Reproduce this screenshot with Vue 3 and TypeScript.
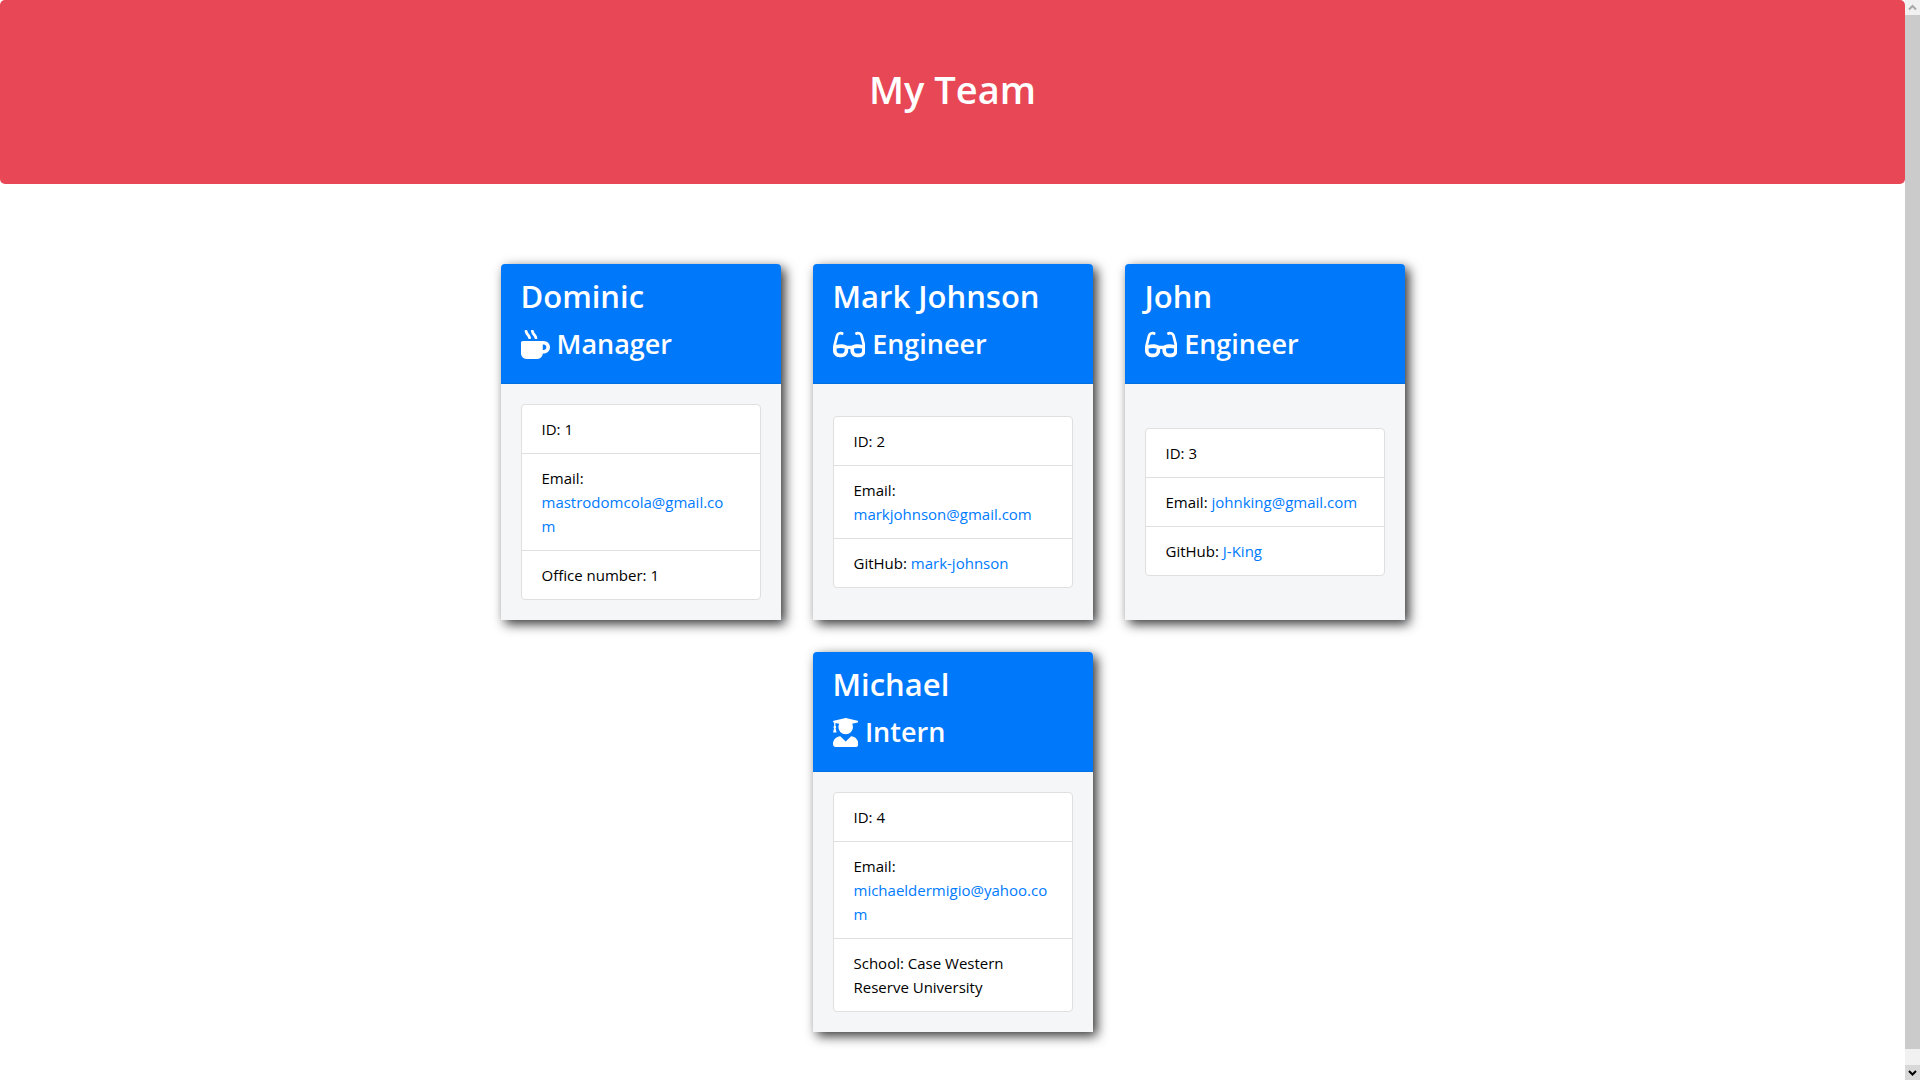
<script setup lang="ts">
interface Detail {
  label: string
  value: string
  href?: string
}

interface Member {
  name: string
  role: string
  icon: 'mug' | 'glasses' | 'graduate'
  details: Detail[]
}

const icons: Record<Member['icon'], { width: number; path: string }> = {
  mug: {
    width: 512,
    path: 'M127.1 146.5c1.3 7.7 8 13.5 16 13.5h16.5c9.8 0 17.6-8.5 16.3-18-3.8-28.2-16.4-54.2-36.6-74.7-14.4-14.7-23.6-33.3-26.4-53.5C111.8 5.9 105 0 96.8 0H80.4C70.6 0 63 8.5 64.1 18c3.9 31.9 18 61.3 40.6 84.4 12 12.2 19.7 27.5 22.4 44.1zm112 0c1.3 7.7 8 13.5 16 13.5h16.5c9.8 0 17.6-8.5 16.3-18-3.8-28.2-16.4-54.2-36.6-74.7-14.4-14.7-23.6-33.3-26.4-53.5C223.8 5.9 217 0 208.8 0h-16.4c-9.8 0-17.5 8.5-16.3 18 3.9 31.9 18 61.3 40.6 84.4 12 12.2 19.7 27.5 22.4 44.1zM400 192H32c-17.7 0-32 14.3-32 32v192c0 53 43 96 96 96h192c53 0 96-43 96-96h16c61.8 0 112-50.2 112-112s-50.2-112-112-112zm0 160h-16v-96h16c26.5 0 48 21.5 48 48s-21.5 48-48 48z',
  },
  glasses: {
    width: 576,
    path: 'M574.1 280.37L528.75 98.66c-5.91-23.7-21.59-44.05-43-55.81-21.44-11.73-46.97-14.11-70.19-6.33l-15.25 5.08c-8.39 2.79-12.92 11.86-10.12 20.24l5.06 15.18c2.79 8.38 11.85 12.91 20.23 10.12l13.18-4.39c10.87-3.62 23-3.57 33.16 1.73 10.29 5.37 17.57 14.56 20.37 25.82l38.46 153.82c-22.19-6.81-49.79-12.46-81.2-12.46-34.77 0-73.98 7.02-114.85 26.74h-73.18c-40.87-19.74-80.08-26.75-114.86-26.75-31.42 0-59.02 5.65-81.21 12.46l38.46-153.83c2.79-11.25 10.09-20.45 20.38-25.81 10.16-5.3 22.28-5.35 33.15-1.73l13.17 4.39c8.38 2.79 17.44-1.74 20.23-10.12l5.06-15.18c2.8-8.38-1.73-17.45-10.12-20.24l-15.25-5.08c-23.22-7.78-48.75-5.41-70.19 6.33-21.41 11.77-37.09 32.11-43 55.81L1.9 280.37A64.218 64.218 0 0 0 0 295.86v70.25C0 429.01 51.58 480 115.2 480h37.12c60.28 0 110.37-45.94 114.88-105.37l2.93-38.63h35.75l2.93 38.63C313.31 434.06 363.4 480 423.68 480h37.12c63.62 0 115.2-50.99 115.2-113.88v-70.25c0-5.23-.64-10.43-1.9-15.5zm-370.72 89.42c-1.97 25.91-24.4 46.21-51.06 46.21H115.2C86.97 416 64 393.62 64 366.11v-37.54c18.12-6.49 43.42-12.92 72.58-12.92 23.86 0 47.26 4.33 69.93 12.92l-3.13 41.22zM512 366.12c0 27.51-22.97 49.88-51.2 49.88h-37.12c-26.67 0-49.1-20.3-51.06-46.21l-3.13-41.22c22.67-8.59 46.08-12.92 69.95-12.92 29.12 0 54.43 6.44 72.55 12.93v37.54z',
  },
  graduate: {
    width: 448,
    path: 'M319.4 320.6L224 416l-95.4-95.4C57.1 323.7 0 382.2 0 454.4v9.6c0 26.5 21.5 48 48 48h352c26.5 0 48-21.5 48-48v-9.6c0-72.2-57.1-130.7-128.6-133.8zM13.6 79.8l6.4 1.5v58.4c-7 4.2-12 11.5-12 20.3 0 8.4 4.6 15.4 11.1 19.7L3.5 242c-1.7 6.9 2.1 14 7.6 14h41.8c5.5 0 9.3-7.1 7.6-14l-15.6-62.3C51.4 175.4 56 168.4 56 160c0-8.8-5-16.1-12-20.3V87.1l66 15.9c-8.6 17.2-14 36.4-14 57 0 70.7 57.3 128 128 128s128-57.3 128-128c0-20.6-5.3-39.8-14-57l96.3-23.2c18.2-4.4 18.2-27.1 0-31.5l-190.4-46c-13-3.1-26.7-3.1-39.7 0L13.6 48.2c-18.1 4.4-18.1 27.2 0 31.6z',
  },
}

const email = (address: string): Detail => ({ label: 'Email', value: address, href: `mailto:${address}` })
const github = (user: string): Detail => ({ label: 'GitHub', value: user, href: `https://github.com/${user}` })

const team: Member[] = [
  {
    name: 'Dominic',
    role: 'Manager',
    icon: 'mug',
    details: [{ label: 'ID', value: '1' }, email('mastrodomcola@gmail.com'), { label: 'Office number', value: '1' }],
  },
  {
    name: 'Mark Johnson',
    role: 'Engineer',
    icon: 'glasses',
    details: [{ label: 'ID', value: '2' }, email('markjohnson@gmail.com'), github('mark-johnson')],
  },
  {
    name: 'John',
    role: 'Engineer',
    icon: 'glasses',
    details: [{ label: 'ID', value: '3' }, email('johnking@gmail.com'), github('J-King')],
  },
  {
    name: 'Michael',
    role: 'Intern',
    icon: 'graduate',
    details: [
      { label: 'ID', value: '4' },
      email('michaeldermigio@yahoo.com'),
      { label: 'School', value: 'Case Western Reserve University' },
    ],
  },
]
</script>

<template>
  <div class="page">
    <div class="content">
      <header class="banner">
        <h1>My Team</h1>
      </header>
      <main class="team">
        <article v-for="member in team" :key="member.name" class="card">
          <div class="card-header">
            <h2>{{ member.name }}</h2>
            <h3>
              <svg class="icon" :viewBox="`0 0 ${icons[member.icon].width} 512`" aria-hidden="true">
                <path :d="icons[member.icon].path" fill="currentColor" />
              </svg>
              <span>{{ member.role }}</span>
            </h3>
          </div>
          <div class="card-body">
            <ul class="details">
              <li v-for="detail in member.details" :key="detail.label">
                <template v-if="detail.href">{{ detail.label }}: <a :href="detail.href">{{ detail.value }}</a></template>
                <template v-else>{{ `${detail.label}: ${detail.value}` }}</template>
              </li>
            </ul>
          </div>
        </article>
      </main>
    </div>
    <div class="scrollbar" aria-hidden="true">
      <div class="arrow arrow-up">
        <svg viewBox="0 0 15 15"><path d="M4 9.500L7.500 6L11 9.500" /></svg>
      </div>
      <div class="track"><div class="thumb"></div></div>
      <div class="arrow arrow-down">
        <svg viewBox="0 0 15 15"><path d="M4 6L7.500 9.500L11 6" /></svg>
      </div>
    </div>
  </div>
</template>

<style>
body {
  margin: 0;
  background: #fff;
}
</style>

<style scoped>
*,
*::before,
*::after {
  box-sizing: border-box;
}

.page {
  display: flex;
  align-items: flex-start;
  color: #000;
  font-family: 'Open Sans', 'Noto Sans', sans-serif;
  font-size: 15px;
  line-height: 24px;
}

.content {
  flex: 1;
  min-width: 0;
}

.banner {
  padding: 64px 32px;
  border-radius: 5px;
  background: #e84756;
  color: #fff;
  text-align: center;
}

h1,
h2,
h3 {
  margin: 0 0 8px;
  font-weight: 600;
}

h1 {
  margin-bottom: 6px;
  font-size: 38px;
  line-height: 50px;
}

h2 {
  font-size: 31px;
  line-height: 40px;
}

h3 {
  display: flex;
  align-items: center;
  gap: 7px;
  font-size: 27px;
  line-height: 40px;
}

.icon {
  height: 29px;
}

.team {
  display: flex;
  flex-wrap: wrap;
  justify-content: center;
  gap: 32px;
  max-width: 1140px;
  margin: 80px auto 48px;
}

.card {
  display: flex;
  flex-direction: column;
  width: 280px;
  border-radius: 4px 4px 0 0;
  background: #f5f6f8;
  box-shadow: 4px 4px 12px rgba(0, 0, 0, 0.8);
}

.card-header {
  padding: 12px 20px 11px;
  border-bottom: 1px solid #006fe0;
  border-radius: 4px 4px 0 0;
  background: #0078fa;
  color: #fff;
}

.card-body {
  display: flex;
  flex: 1;
  flex-direction: column;
  justify-content: center;
  padding: 20px;
}

.details {
  margin: 0;
  padding: 0;
  border: 1px solid #dfdfdf;
  border-radius: 4px;
  background: #fff;
  list-style: none;
}

.details li {
  padding: 12px 23px 12px 20px;
  overflow-wrap: break-word;
}

.details li + li {
  border-top: 1px solid #dfdfdf;
}

.details a {
  color: #007bff;
  text-decoration: none;
}

.scrollbar {
  display: flex;
  position: sticky;
  top: 0;
  flex-direction: column;
  width: 15px;
  height: 100vh;
  background: #f1f1f1;
}

.arrow {
  display: flex;
  height: 15px;
}

.arrow svg {
  width: 15px;
  fill: none;
  stroke: #a8a8a8;
  stroke-width: 2;
}

.arrow-down {
  background: #d8d8d8;
}

.arrow-down svg {
  stroke: #000;
}

.track {
  flex: 1;
}

.thumb {
  height: 98.5%;
  background: #cbcbcb;
}
</style>
